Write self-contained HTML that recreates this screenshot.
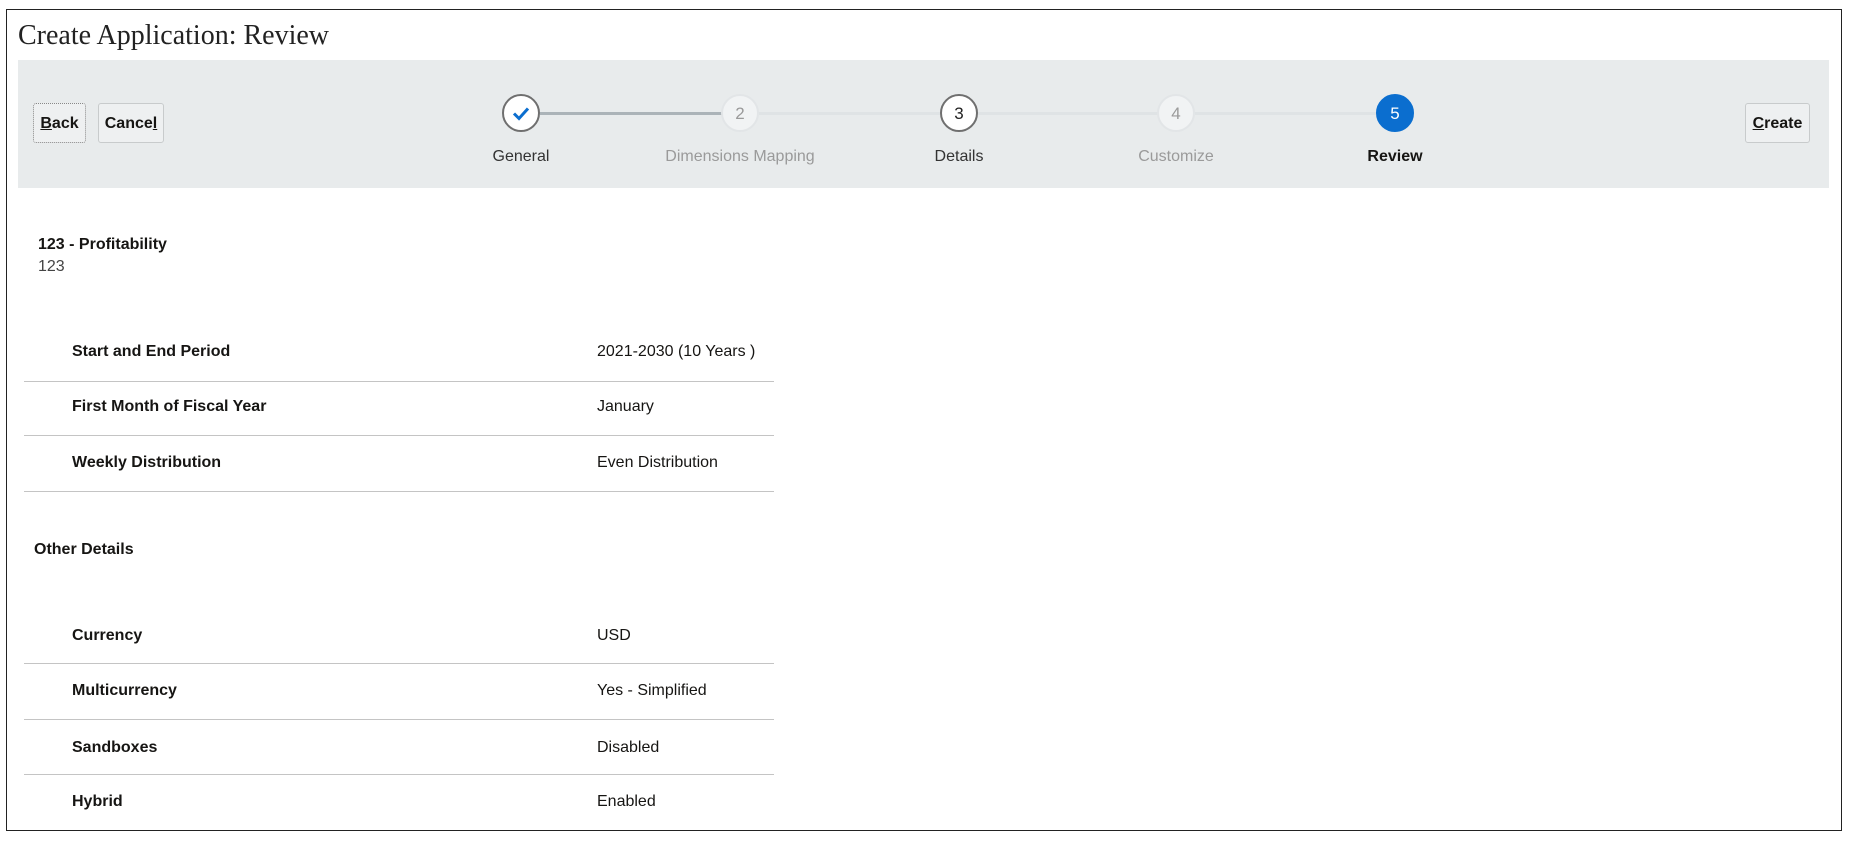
<!DOCTYPE html>
<html><head><meta charset="utf-8"><style>
*{box-sizing:border-box;margin:0;padding:0}
body{width:1853px;height:847px;background:#fff;font-family:"Liberation Sans",sans-serif;color:#161513;position:relative;overflow:hidden}
.frame{position:absolute;left:6px;top:9px;width:1836px;height:822px;border:1px solid #222}
.title{position:absolute;left:18px;top:20px;font-family:"Liberation Serif",serif;font-size:28px;color:#222}
.band{position:absolute;left:18px;top:60px;width:1811px;height:128px;background:#e8ebec}
.btn{position:absolute;top:103px;height:40px;border:1px solid #c8cbcc;border-radius:3px;background:#eef0f1;font-size:16px;font-weight:bold;line-height:40px;text-align:center;color:#161513}
.btn u{text-decoration:underline}
.circ{position:absolute;width:38px;height:38px;border-radius:50%;top:94px;text-align:center;line-height:36px;font-size:17px}
.lbl{position:absolute;top:148px;font-size:16px;transform:translateX(-50%);white-space:nowrap}
.line{position:absolute;top:112px;height:3px}
.t{position:absolute;font-size:16px;white-space:nowrap}
.b{font-weight:bold}
.sep{position:absolute;left:24px;width:750px;height:1px;background:#c4c4c4}
</style></head><body>
<div class="frame"></div>
<div class="title">Create Application: Review</div>
<div class="band"></div>
<div class="btn" style="left:33px;width:53px;border-style:dotted;border-color:#888"><u>B</u>ack</div>
<div class="btn" style="left:98px;width:66px">Cance<u>l</u></div>
<div class="btn" style="left:1745px;width:65px"><u>C</u>reate</div>

<div class="line" style="left:540px;width:182px;background:#abb3b8"></div>
<div class="line" style="left:759px;width:181px;background:#dfe3e5"></div>
<div class="line" style="left:978px;width:180px;background:#dfe3e5"></div>
<div class="line" style="left:1195px;width:181px;background:#dfe3e5"></div>

<div class="circ" style="left:502px;background:#fff;border:2px solid #6f6f6f"><svg width="34" height="34" viewBox="0 0 34 34"><path d="M10 17.5l5 5 9-10" fill="none" stroke="#0b6ecf" stroke-width="3"/></svg></div>
<div class="circ" style="left:721px;background:#f1f3f4;border:2px solid #e2e5e7;color:#9a9a9a">2</div>
<div class="circ" style="left:940px;background:#fff;border:2px solid #6f6f6f;color:#222">3</div>
<div class="circ" style="left:1157px;background:#f1f3f4;border:2px solid #e2e5e7;color:#9a9a9a">4</div>
<div class="circ" style="left:1376px;background:#0b6ecf;border:2px solid #0b6ecf;color:#fff">5</div>

<div class="lbl" style="left:521px;color:#333">General</div>
<div class="lbl" style="left:740px;color:#9a9a9a">Dimensions Mapping</div>
<div class="lbl" style="left:959px;color:#333">Details</div>
<div class="lbl" style="left:1176px;color:#9a9a9a">Customize</div>
<div class="lbl b" style="left:1395px;color:#161513">Review</div>

<div class="t b" style="left:38px;top:236px">123 - Profitability</div>
<div class="t" style="left:38px;top:258px;color:#444">123</div>

<div class="t b" style="left:72px;top:343px">Start and End Period</div><div class="t" style="left:597px;top:343px">2021-2030 (10 Years )</div>
<div class="sep" style="top:381px"></div>
<div class="t b" style="left:72px;top:398px">First Month of Fiscal Year</div><div class="t" style="left:597px;top:398px">January</div>
<div class="sep" style="top:435px"></div>
<div class="t b" style="left:72px;top:454px">Weekly Distribution</div><div class="t" style="left:597px;top:454px">Even Distribution</div>
<div class="sep" style="top:491px"></div>
<div class="t b" style="left:34px;top:541px">Other Details</div>
<div class="t b" style="left:72px;top:627px">Currency</div><div class="t" style="left:597px;top:627px">USD</div>
<div class="sep" style="top:663px"></div>
<div class="t b" style="left:72px;top:682px">Multicurrency</div><div class="t" style="left:597px;top:682px">Yes - Simplified</div>
<div class="sep" style="top:719px"></div>
<div class="t b" style="left:72px;top:739px">Sandboxes</div><div class="t" style="left:597px;top:739px">Disabled</div>
<div class="sep" style="top:774px"></div>
<div class="t b" style="left:72px;top:793px">Hybrid</div><div class="t" style="left:597px;top:793px">Enabled</div>
</body></html>
